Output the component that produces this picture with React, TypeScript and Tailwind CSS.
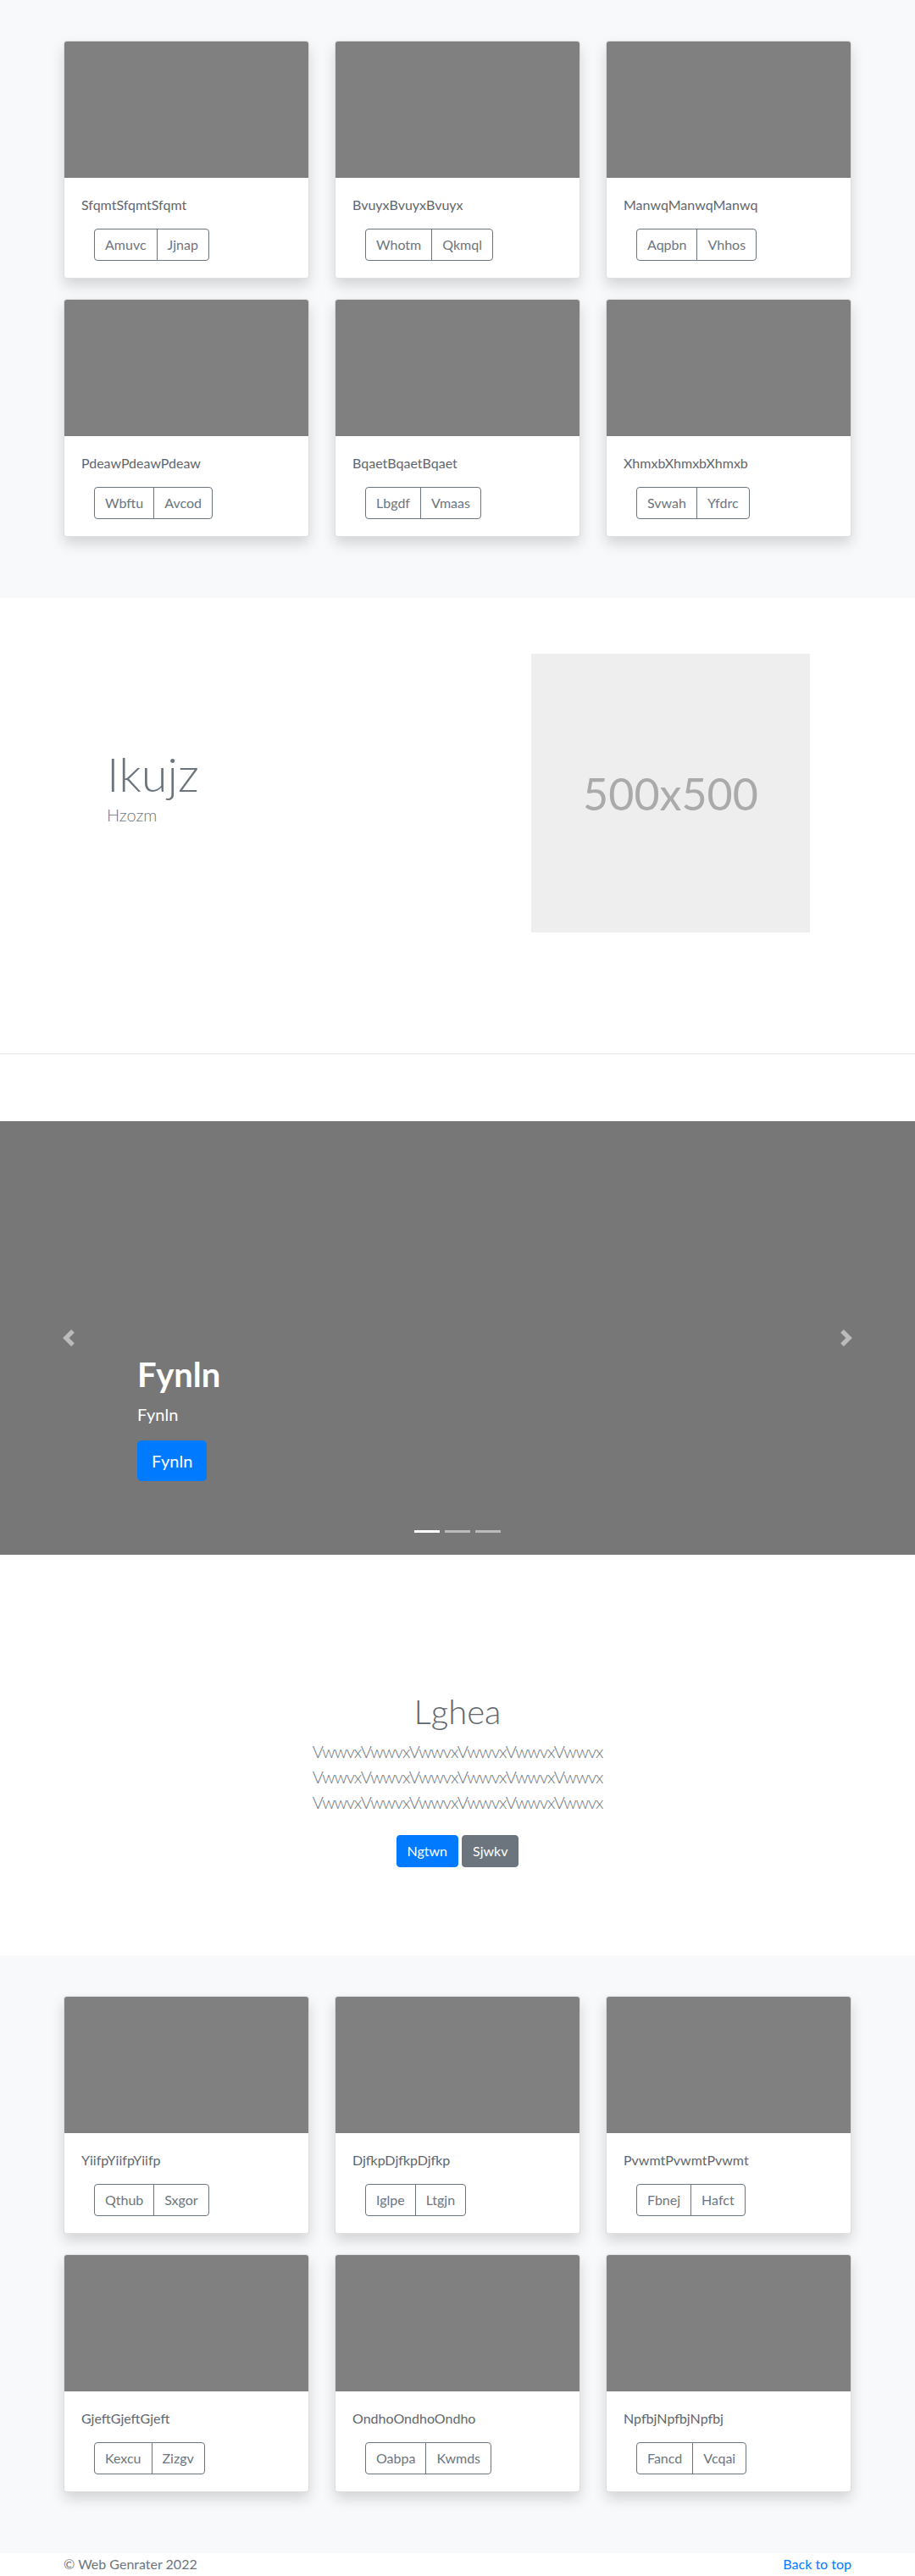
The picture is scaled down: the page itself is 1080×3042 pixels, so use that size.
import React from "react";

interface CardItem {
  title: string;
  actions: [string, string];
}

const topCards: CardItem[] = [
  { title: "SfqmtSfqmtSfqmt", actions: ["Amuvc", "Jjnap"] },
  { title: "BvuyxBvuyxBvuyx", actions: ["Whotm", "Qkmql"] },
  { title: "ManwqManwqManwq", actions: ["Aqpbn", "Vhhos"] },
  { title: "PdeawPdeawPdeaw", actions: ["Wbftu", "Avcod"] },
  { title: "BqaetBqaetBqaet", actions: ["Lbgdf", "Vmaas"] },
  { title: "XhmxbXhmxbXhmxb", actions: ["Svwah", "Yfdrc"] },
];

const bottomCards: CardItem[] = [
  { title: "YiifpYiifpYiifp", actions: ["Qthub", "Sxgor"] },
  { title: "DjfkpDjfkpDjfkp", actions: ["Iglpe", "Ltgjn"] },
  { title: "PvwmtPvwmtPvwmt", actions: ["Fbnej", "Hafct"] },
  { title: "GjeftGjeftGjeft", actions: ["Kexcu", "Zizgv"] },
  { title: "OndhoOndhoOndho", actions: ["Oabpa", "Kwmds"] },
  { title: "NpfbjNpfbjNpfbj", actions: ["Fancd", "Vcqai"] },
];

const Card: React.FC<{ item: CardItem }> = ({ item }) => (
  <div className="mb-6 bg-white border border-black/[0.125] rounded-[4px] overflow-hidden shadow-[0_8px_16px_rgba(0,0,0,0.15)]">
    <div className="h-[161px] bg-[#808080]" />
    <div className="p-5">
      <p className="text-[16px] leading-6 text-[#5f666d] mb-4">{item.title}</p>
      <div className="flex ml-[15px]">
        <button className="px-3 py-1.5 text-[16px] leading-6 text-[#6c757d] border border-[#6c757d] rounded-l-[4px]">
          {item.actions[0]}
        </button>
        <button className="-ml-px px-3 py-1.5 text-[16px] leading-6 text-[#6c757d] border border-[#6c757d] rounded-r-[4px]">
          {item.actions[1]}
        </button>
      </div>
    </div>
  </div>
);

const Album: React.FC<{ cards: CardItem[] }> = ({ cards }) => (
  <section className="bg-[#f8f9fa] py-12">
    <div className="w-[930px] mx-auto grid grid-cols-3 gap-x-[30px]">
      {cards.map((c) => (
        <Card key={c.title} item={c} />
      ))}
    </div>
  </section>
);

const App: React.FC = () => {
  return (
    <div className="font-['Lato','Noto_Sans',sans-serif] text-[#212529]">
      <Album cards={topCards} />

      {/* hero with placeholder */}
      <section className="bg-white pt-[66px] pb-[143px] border-b border-[#e6e6e6]">
        <div className="w-[930px] mx-auto flex items-center">
          <div className="flex-1 pl-[51px]">
            <h1 className="text-[56px] leading-[1.2] font-light text-[#6c757d]">Ikujz</h1>
            <p className="text-[20px] leading-[1.5] font-light text-[#6c757d] mb-4">Hzozm</p>
          </div>
          <div className="w-[329px] h-[329px] mr-[49px] bg-[#eeeeee] flex items-center justify-center">
            <span className="text-[52px] text-[#aaaaaa]">500x500</span>
          </div>
        </div>
      </section>

      {/* carousel */}
      <div className="mt-[79px] relative h-[512px] bg-[#777777] overflow-hidden">
        <button className="absolute top-0 bottom-0 left-0 w-[15%] flex items-center justify-center opacity-50">
          <svg width="20" height="20" viewBox="0 0 8 8" fill="#fff">
            <path d="M5.25 0l-4 4 4 4 1.5-1.5L4.25 4l2.5-2.5L5.25 0z" />
          </svg>
        </button>
        <button className="absolute top-0 bottom-0 right-0 w-[15%] flex items-center justify-center opacity-50">
          <svg width="20" height="20" viewBox="0 0 8 8" fill="#fff">
            <path d="M2.75 0l-1.5 1.5L3.75 4l-2.5 2.5L2.75 8l4-4-4-4z" />
          </svg>
        </button>
        <div className="absolute left-[15%] right-[15%] bottom-[51px] py-5 text-white text-left">
          <h1 className="text-[40px] leading-[1.2] font-bold mb-2">Fynln</h1>
          <p className="text-[20px] leading-[1.5] mb-4">Fynln</p>
          <p className="mb-4">
            <a className="inline-block px-4 py-2 text-[20px] leading-[1.5] text-white bg-[#007bff] border border-[#007bff] rounded-[4.8px]">
              Fynln
            </a>
          </p>
        </div>
        <ol className="absolute bottom-[26px] left-0 right-0 flex justify-center">
          <li className="w-[30px] h-[3px] mx-[3px] bg-white" />
          <li className="w-[30px] h-[3px] mx-[3px] bg-white/50" />
          <li className="w-[30px] h-[3px] mx-[3px] bg-white/50" />
        </ol>
      </div>

      {/* jumbotron */}
      <section className="bg-white pt-[161px] pb-[96px] text-center">
        <div className="w-[450px] mx-auto">
          <h1 className="text-[40px] leading-[1.2] font-light text-[#5f666d] mb-2">Lghea</h1>
          <p className="text-[20px] leading-[1.5] font-light tracking-[-1px] text-[#6c757d] mb-4">
            VwwvxVwwvxVwwvxVwwvxVwwvxVwwvx VwwvxVwwvxVwwvxVwwvxVwwvxVwwvx VwwvxVwwvxVwwvxVwwvxVwwvxVwwvx
          </p>
          <p className="flex justify-center gap-1">
            <a className="my-2 inline-block px-3 py-1.5 text-[16px] leading-6 text-white bg-[#007bff] border border-[#007bff] rounded-[4px]">
              Ngtwn
            </a>
            <a className="my-2 inline-block px-3 py-1.5 text-[16px] leading-6 text-white bg-[#6c757d] border border-[#6c757d] rounded-[4px]">
              Sjwkv
            </a>
          </p>
        </div>
      </section>

      <Album cards={bottomCards} />

      <footer className="bg-white pb-12">
        <div className="w-[930px] mx-auto flex justify-between text-[16px] leading-6 pt-px">
          <p className="text-[#6c757d]">© Web Genrater 2022</p>
          <a className="text-[#007bff]">Back to top</a>
        </div>
      </footer>
    </div>
  );
};

export default App;
